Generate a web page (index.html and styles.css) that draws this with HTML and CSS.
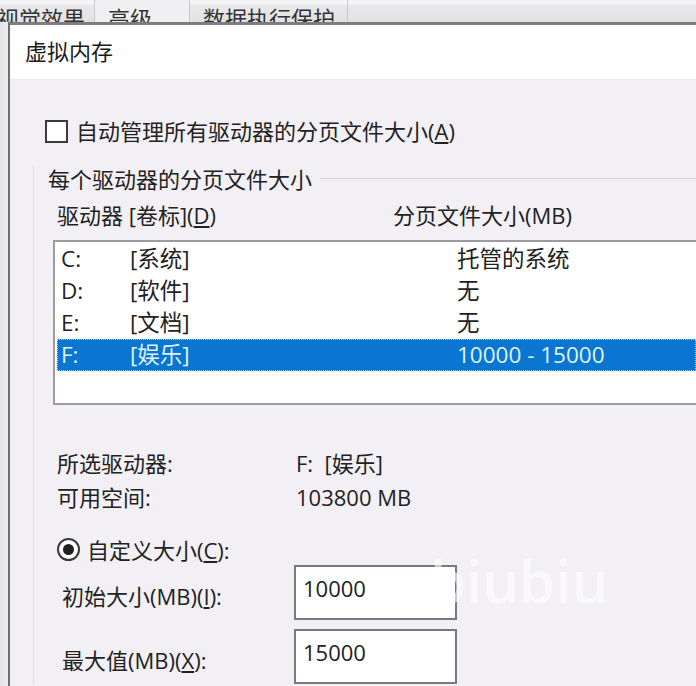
FILE: index.html
```html
<!DOCTYPE html>
<html lang="zh-CN">
<head>
  <meta charset="UTF-8"><title>虚拟内存</title>
  <meta name="viewport" content="width=device-width,initial-scale=1">
  <link rel="stylesheet" href="styles.css">
</head>
<body>

  <!-- Parent window tabs (behind the dialog) -->
  <div class="tabs">
    <span class="tab first">视觉效果</span>
    <span class="tab active">高级</span>
    <span class="tab">数据执行保护</span>
  </div>

  <div class="frame">
    <div class="side"></div>

    <div class="dialog">
      <div class="title">虚拟内存</div>

      <div class="body">
        <label class="check"><span class="box"></span><span>自动管理所有驱动器的分页文件大小(<u>A</u>)</span></label>

        <div class="group">
          <div class="group-title"><span>每个驱动器的分页文件大小</span><i class="rule"></i></div>

          <div class="cols">
            <span class="col-drive">驱动器 [卷标](<u>D</u>)</span>
            <span>分页文件大小(MB)</span>
          </div>

          <div class="list">
            <div class="row"><span class="drv">C:</span><span class="vol">[系统]</span><span>托管的系统</span></div>
            <div class="row"><span class="drv">D:</span><span class="vol">[软件]</span><span>无</span></div>
            <div class="row"><span class="drv">E:</span><span class="vol">[文档]</span><span>无</span></div>
            <div class="row selected"><span class="drv">F:</span><span class="vol">[娱乐]</span><span>10000 - 15000</span></div>
          </div>

          <div class="info">
            <div class="info-row"><span class="info-label">所选驱动器:</span><span>F:&nbsp;&nbsp;[娱乐]</span></div>
            <div class="info-row"><span class="info-label">可用空间:</span><span>103800 MB</span></div>
          </div>

          <label class="radio"><span class="dot"></span><span>自定义大小(<u>C</u>):</span></label>

          <div class="field first-field">
            <span class="field-label">初始大小(MB)(<u>I</u>):</span>
            <div class="input">10000</div>
          </div>
          <div class="field">
            <span class="field-label">最大值(MB)(<u>X</u>):</span>
            <div class="input">15000</div>
          </div>
        </div>

        <div class="watermark">biubiu</div>
      </div>
    </div>
  </div>

</body>
</html>
```

FILE: styles.css
```css
* { margin:0; padding:0; box-sizing:border-box }
body { width:696px; height:686px; overflow:hidden; background:#e8e8ea;
  font-family:'Open Sans','Noto Sans CJK SC',sans-serif; font-size:22px; color:#222;
}
u { text-decoration:underline; text-underline-offset:2px; }

/* Tabs of the window behind */
.tabs { height:22px; overflow:hidden; display:flex; white-space:nowrap;
  background:linear-gradient(#f4f4f5 0, #f4f4f5 4px, #e9e9eb 5px, #e2e2e4 22px);
}
.tab { padding:7px 12px 0 13px; line-height:22px; border-right:1px solid #c8c8cc; color:#333; }
.tab.first { margin-left:-3px; padding-left:0; width:98px; }
.tab.active { background:#f0f0f2; width:95px; }

/* Dialog */
.frame { display:flex; height:664px; }
.side { width:8px; background:linear-gradient(90deg,#e4e4e6,#ececee); }
.dialog { flex:1; border-left:2px solid #6f6f72; border-top:3px solid #7d7d80; background:#f2f0f5; display:flex; flex-direction:column; }
.title { height:55px; background:#fefeff; border-bottom:1px solid #ecebef; padding-left:15px; line-height:53px; font-size:22px; color:#1a1a1a; }
.body { position:relative; flex:1; }

.check { display:flex; align-items:center; gap:8px; margin:40px 0 0 35px; height:23px; line-height:23px; }
.box { width:23px; height:23px; border:2px solid #3a3a3a; background:#fff; }

.group { margin:23px 0 0 23px; border-left:1px solid #e0dee4; }
.group-title { display:flex; align-items:center; height:24px; padding-left:14px; gap:8px; }
.rule { flex:1; height:1px; background:#d6d4da; }

.cols { display:flex; height:24px; line-height:24px; margin-top:13px; padding-left:23px; }
.col-drive { width:336px; }

.list { margin:13px 0 0 19px; height:165px; border:2px solid #9c9ca0; border-right:none; background:#fff; padding:1px 0 0 2px; }
.row { display:flex; height:32px; line-height:32px; padding-left:4px; font-size:22.5px; }
.drv { width:69px; }
.vol { width:327px; }
.row.selected { background:#0a76d2; color:#dff3ff; outline:1px dotted #9fd0f5; outline-offset:-1px; }

.info { margin:41px 0 0 23px; }
.info-row { display:flex; height:34px; line-height:34px; }
.info-label { width:239px; }

.radio { display:flex; align-items:center; gap:7px; margin:22px 0 0 23px; height:26px; }
.dot { width:23px; height:23px; border:2px solid #3a3a3a; border-radius:50%; background:#fff; display:flex; align-items:center; justify-content:center; }
.dot::after { content:''; width:11px; height:11px; border-radius:50%; background:#1f1f1f; }

.field { display:flex; margin:9px 0 0 28px; }
.field.first-field { margin-top:3px; }
.field-label { width:232px; padding-top:19px; line-height:24px; }
.input { width:163px; height:55px; border:2px solid #7a7a7e; background:#fff; padding:8px 0 0 7px; line-height:26px; }

/* video watermark over the dialog */
.watermark { position:absolute; left:420px; top:471px; font-size:58px; font-weight:600; line-height:60px; color:#fff; opacity:.6; }
```
